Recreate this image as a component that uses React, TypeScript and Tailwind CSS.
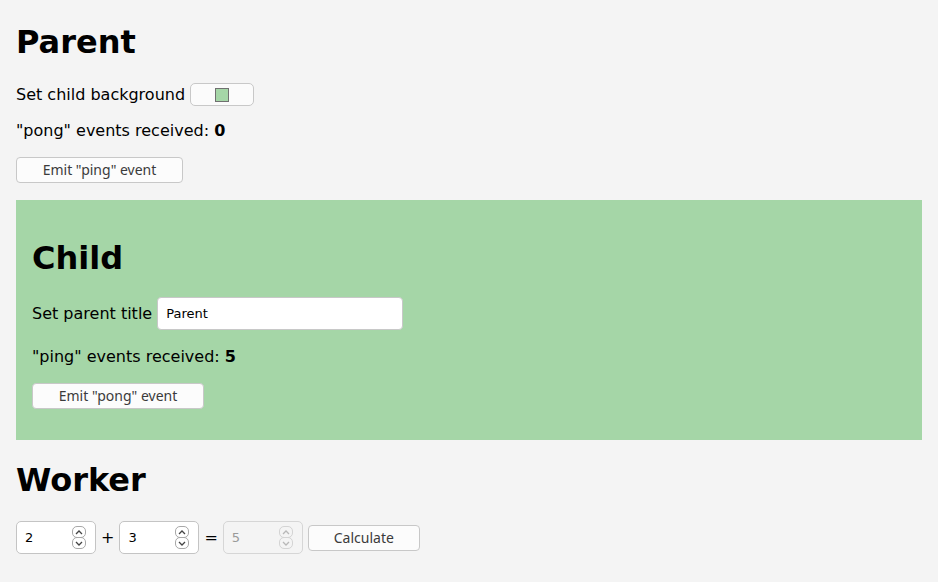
import { useState } from "react";

const btn =
  "block h-[26px] rounded-[4px] border border-[#c8c8c8] bg-[#fcfcfc] text-[14px] text-[#3b3b3b] font-['Noto_Sans',sans-serif] leading-none";

const Spinner = ({ disabled }: { disabled?: boolean }) => {
  const c = disabled ? "border-[#d4d4d4] text-[#b8b8b8]" : "border-[#a8a8a8] text-[#444]";
  return (
    <div className="flex flex-col">
      <div className={`flex h-[12px] w-[14px] items-center justify-center rounded-[5px] border ${c}`}>
        <svg width="8" height="5" viewBox="0 0 8 5" fill="none">
          <path d="M1 4 L4 1 L7 4" stroke="currentColor" strokeWidth="1.3" />
        </svg>
      </div>
      <div className={`-mt-px flex h-[12px] w-[14px] items-center justify-center rounded-[5px] border ${c}`}>
        <svg width="8" height="5" viewBox="0 0 8 5" fill="none">
          <path d="M1 1 L4 4 L7 1" stroke="currentColor" strokeWidth="1.3" />
        </svg>
      </div>
    </div>
  );
};

const NumberBox = ({
  value,
  onChange,
  disabled,
}: {
  value: number;
  onChange?: (v: number) => void;
  disabled?: boolean;
}) => (
  <div
    className={`flex h-[33px] w-[80px] items-center rounded-[5px] border pl-[8px] pr-[9px] ${
      disabled ? "border-[#d6d6d6] bg-[#f4f4f4]" : "border-[#c4c4c4] bg-white"
    }`}
  >
    <input
      type="text"
      value={value}
      disabled={disabled}
      onChange={(e) => onChange && onChange(Number(e.target.value) || 0)}
      className={`w-0 flex-1 bg-transparent text-[13px] outline-none ${
        disabled ? "text-[#9a9a9a]" : "text-black"
      }`}
    />
    <Spinner disabled={disabled} />
  </div>
);

const App = () => {
  const [title, setTitle] = useState("Parent");
  const [pongs, setPongs] = useState(0);
  const [pings, setPings] = useState(5);
  const [a, setA] = useState(2);
  const [b, setB] = useState(3);
  const [sum, setSum] = useState(5);

  return (
    <div className="min-h-screen bg-[#f4f4f4] px-4 font-['DejaVu_Sans',sans-serif] text-[16px] text-black">
      <h1 className="pt-[22px] text-[32px] font-bold leading-[40px]">{title}</h1>

      <div className="mt-[21px] flex h-[23px] items-center gap-[5px] leading-[24px]">
        <span>Set child background</span>
        <div className="flex h-[23px] w-[64px] items-center justify-center rounded-[5px] border border-[#c8c8c8] bg-[#fbfbfb]">
          <div className="h-[14px] w-[14px] border border-[#707070] bg-[#a5d6a7]" />
        </div>
      </div>

      <p className="mt-[13px] leading-[24px]">
        "pong" events received: <b>{pongs}</b>
      </p>

      <button onClick={() => setPings(pings + 1)} className={`${btn} mt-[14px] w-[167px]`}>
        Emit "ping" event
      </button>

      <div className="mt-[17px] bg-[#a5d6a7] px-4 pt-[38px] pb-[31px]">
        <h1 className="text-[32px] font-bold leading-[40px]">Child</h1>

        <div className="mt-[19px] flex h-[33px] items-center gap-[5px] leading-[24px]">
          <span>Set parent title</span>
          <input
            value={title}
            onChange={(e) => setTitle(e.target.value)}
            className="h-[33px] w-[246px] rounded-[4px] border border-[#c8c8c8] bg-white px-[8px] text-[13px] outline-none"
          />
        </div>

        <p className="mt-[15px] leading-[24px]">
          "ping" events received: <b>{pings}</b>
        </p>

        <button
          onClick={() => setPongs(pongs + 1)}
          className={`${btn} mt-[14px] w-[172px]`}
        >
          Emit "pong" event
        </button>
      </div>

      <h1 className="mt-5 text-[32px] font-bold leading-[40px]">Worker</h1>

      <div className="mt-[21px] flex items-center gap-[5px] pb-7">
        <NumberBox value={a} onChange={setA} />
        <span>+</span>
        <NumberBox value={b} onChange={setB} />
        <span>=</span>
        <NumberBox value={sum} disabled />
        <button onClick={() => setSum(a + b)} className={`${btn} w-[112px]`}>
          Calculate
        </button>
      </div>
    </div>
  );
};

export default App;
